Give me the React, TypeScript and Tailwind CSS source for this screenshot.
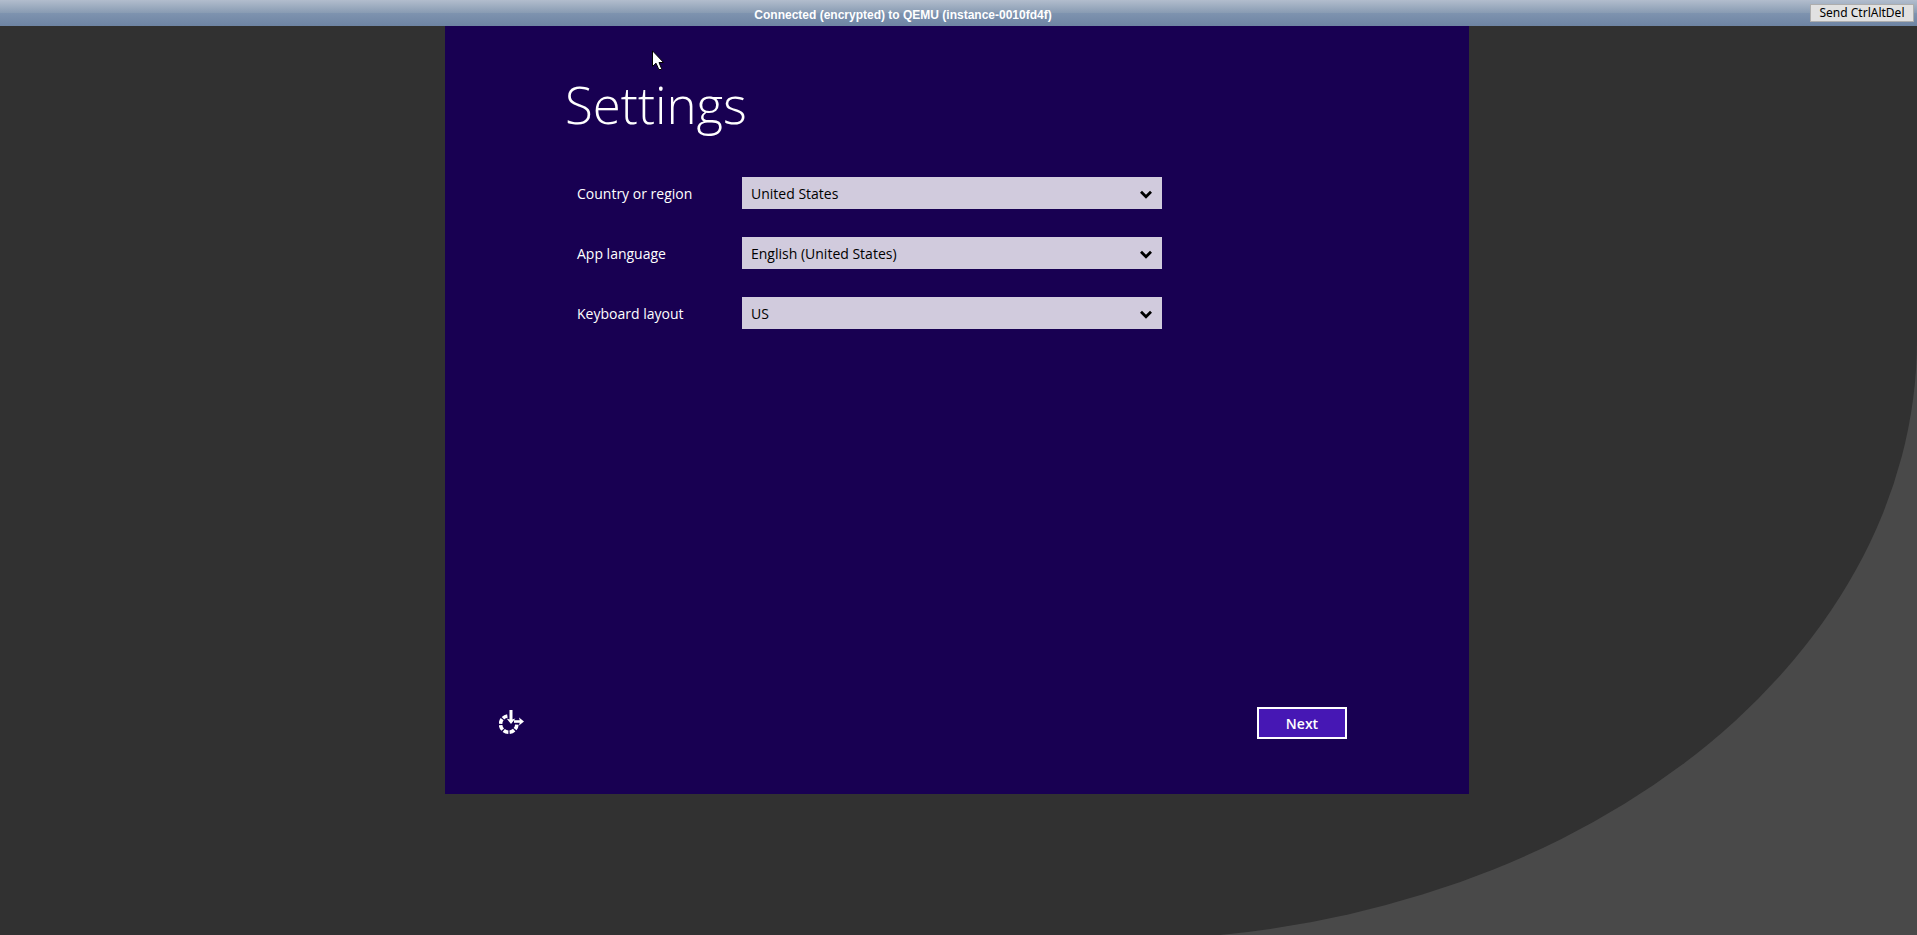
import React from "react";

type Field = { id: string; label: string; options: string[] };

const fields: Field[] = [
  { id: "country", label: "Country or region", options: ["United States", "Canada", "United Kingdom"] },
  { id: "language", label: "App language", options: ["English (United States)"] },
  { id: "keyboard", label: "Keyboard layout", options: ["US", "United Kingdom"] },
];

function Chevron() {
  return (
    <svg className="pointer-events-none absolute right-2.5 top-3 h-2.5 w-3" viewBox="0 0 12 10" fill="none" aria-hidden="true">
      <path d="M1 2.8 L6 7.8 L11 2.8" stroke="#000" strokeWidth="2.8" />
    </svg>
  );
}

function SelectRow({ id, label, options }: Field) {
  return (
    <div className="flex items-center">
      <label htmlFor={id} className="w-[165px] pt-0.5 text-[14px] leading-5 text-white">
        {label}
      </label>
      <div className="relative w-[420px]">
        <select
          id={id}
          className="block h-8 w-full appearance-none rounded-none bg-[#d1cbdd] pl-[9px] pr-8 pt-0.5 text-[14px] leading-5 text-black outline-none"
        >
          {options.map((o) => (
            <option key={o}>{o}</option>
          ))}
        </select>
        <Chevron />
      </div>
    </div>
  );
}

function EaseOfAccessIcon() {
  return (
    <svg className="h-[26px] w-[26px]" viewBox="0 0 26 26" fill="none" aria-hidden="true">
      <g stroke="#fff">
        <path d="M17.9 14.6 A8.2 8.2 0 1 1 8.6 5.9" strokeWidth="3.6" strokeDasharray="5 1.3" />
        <path d="M12 0 V10" strokeWidth="3" />
        <path d="M15 11.5 H21" strokeWidth="2.6" />
      </g>
      <path d="M7.6 8.6 L12 9.8 L16.4 8.6 L12 14 Z" fill="#fff" />
      <path d="M20 7.4 L25 11.5 L20 15.6 L21 11.5 Z" fill="#fff" />
    </svg>
  );
}

function Pointer() {
  return (
    <svg className="absolute left-[207px] top-6 h-[21px] w-[13px]" viewBox="0 0 13 21" aria-hidden="true">
      <path
        d="M0.5 0.8 V16.5 L4 13.2 L6.8 19.5 H9.3 L9.5 18.5 L7 12.5 H11.6 Z"
        fill="#fff"
        stroke="#000"
        strokeWidth="1"
      />
    </svg>
  );
}

export default function App() {
  return (
    <div className="flex h-screen flex-col overflow-hidden bg-[#494949]">
      <header className="grid h-[26px] shrink-0 grid-cols-[1fr_auto] items-center bg-[linear-gradient(to_bottom,#b2bdcd_0%,#899cb3_49%,#7e93af_51%,#6e84a3_100%)] pr-[3px]">
        <h1 className="pr-1 pt-1 text-center font-['Liberation_Sans',Arial,sans-serif] text-[12px] font-bold leading-4 text-white">
          Connected (encrypted) to QEMU (instance-0010fd4f)
        </h1>
        <button
          type="button"
          className="h-[18px] w-[104px] border border-[#adadad] bg-[#e1e1e1] text-center font-['Noto_Sans',sans-serif] text-[12px] leading-4 text-black"
        >
          Send CtrlAltDel
        </button>
      </header>

      <main className="h-[calc(100vh-21px)] shrink-0 rounded-br-[800px_600px] bg-[#313131] pr-[3px]">
        <section className="relative mx-auto flex h-[768px] max-w-[1024px] flex-col bg-[#180052] font-['Open_Sans','Noto_Sans',sans-serif]">
          <h2 className="pl-[120px] pt-[42px] text-[51px] font-light leading-[72px] text-white">Settings</h2>
          <form className="mt-[37px] flex flex-col gap-7 pl-[132px]">
            {fields.map((f) => (
              <SelectRow key={f.id} {...f} />
            ))}
          </form>
          <footer className="mt-auto flex items-center justify-between pb-[55px] pl-[54px] pr-[122px]">
            <button type="button" aria-label="Ease of access">
              <EaseOfAccessIcon />
            </button>
            <button
              type="button"
              className="h-8 w-[90px] border-2 border-white bg-[#4617b4] pt-0.5 text-[14px] font-semibold leading-5 text-white"
            >
              Next
            </button>
          </footer>
          <Pointer />
        </section>
      </main>
    </div>
  );
}
